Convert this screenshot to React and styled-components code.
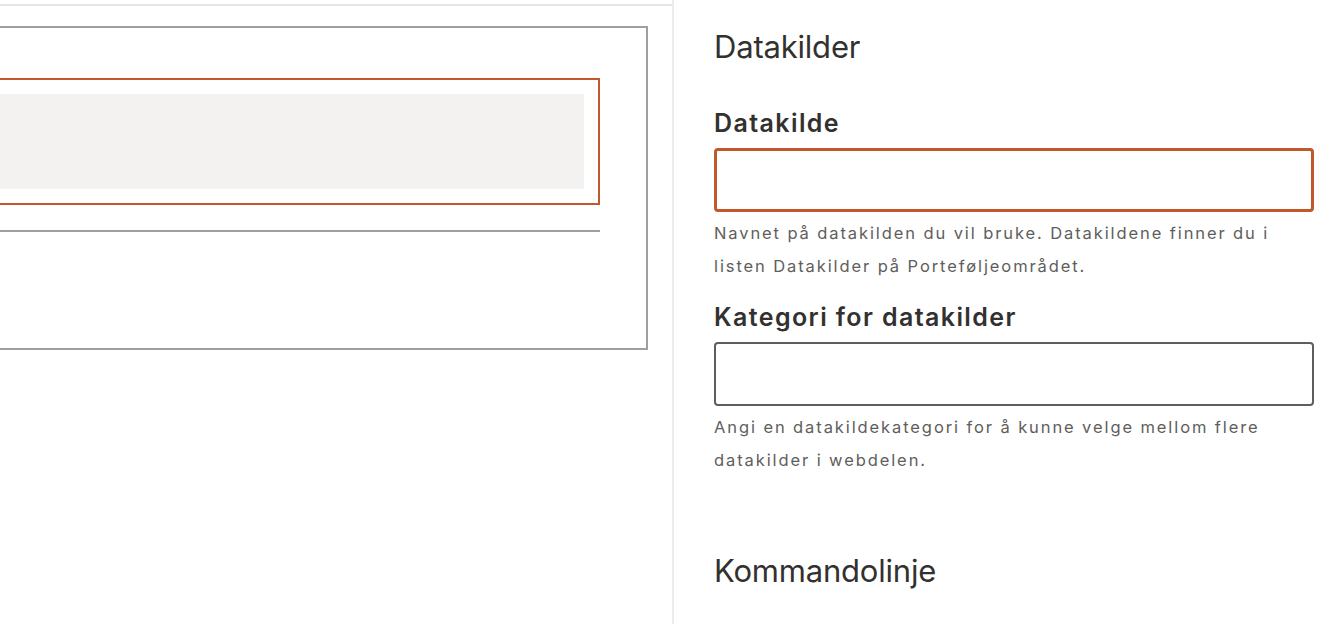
import React from 'react';
import styled, { createGlobalStyle } from 'styled-components';

const GlobalStyle = createGlobalStyle`
  html, body {
    margin: 0;
    padding: 0;
    background: #ffffff;
    overflow: hidden;
  }

  body {
    font-family: Inter, "Noto Sans", "Liberation Sans", sans-serif;
    color: #323130;
  }
`;

const fields = [
  {
    id: 'datasource',
    label: 'Datakilde',
    help: 'Navnet på datakilden du vil bruke. Datakildene finner du i listen Datakilder på Porteføljeområdet.',
    focused: true,
  },
  {
    id: 'category',
    label: 'Kategori for datakilder',
    help: 'Angi en datakildekategori for å kunne velge mellom flere datakilder i webdelen.',
    focused: false,
  },
];

const App = () => (
  <>
    <GlobalStyle />
    <Page>
      <Canvas>
        <TopRule />
        <Section>
          <Zone>
            <Placeholder />
          </Zone>
          <Divider />
        </Section>
      </Canvas>
      <PropertyPane>
        <GroupTitle>Datakilder</GroupTitle>
        <Fields>
          {fields.map(field => (
            <Field key={field.id}>
              <Label htmlFor={field.id}>{field.label}</Label>
              <TextInput id={field.id} type="text" $focused={field.focused} />
              <Help>{field.help}</Help>
            </Field>
          ))}
        </Fields>
        <GroupTitle $spaced>Kommandolinje</GroupTitle>
      </PropertyPane>
    </Page>
  </>
);

const Page = styled.div`
  display: flex;
  height: 100vh;
  overflow: hidden;
`;

const Canvas = styled.main`
  flex: 0 0 672px;
  padding: 4px 24px 0 0;
  box-sizing: border-box;
  overflow: hidden;
`;

const TopRule = styled.div`
  border-top: 2px solid #e6e6e6;
  margin-right: -24px;
`;

const Section = styled.section`
  margin: 20px 0 0 -80px;
  height: 324px;
  box-sizing: border-box;
  border: 2px solid #a19f9d;
  padding: 50px 46px 0 0;
`;

const Zone = styled.div`
  height: 127px;
  box-sizing: border-box;
  border: 2px solid #c0582b;
  padding: 14px;
`;

const Placeholder = styled.div`
  height: 95px;
  background: #f3f2f1;
`;

const Divider = styled.hr`
  margin: 25px 0 0;
  border: 0;
  border-top: 2px solid #a19f9d;
`;

const PropertyPane = styled.aside`
  flex: 1 1 auto;
  border-left: 2px solid #ececec;
  padding: 27px 20px 0 40px;
  box-sizing: border-box;
`;

const GroupTitle = styled.h2`
  margin: ${({ $spaced }) => ($spaced ? '74px' : '0')} 0 0;
  font-size: 31px;
  line-height: 40px;
  font-weight: 400;
  letter-spacing: -0.2px;
  color: #323130;
`;

const Fields = styled.div`
  display: flex;
  flex-direction: column;
  gap: 18px;
  margin-top: 40px;
`;

const Field = styled.div`
  display: flex;
  flex-direction: column;
`;

const Label = styled.label`
  font-size: 25px;
  line-height: 32px;
  font-weight: 600;
  letter-spacing: 1.4px;
  color: #323130;
  margin-bottom: 9px;
`;

const TextInput = styled.input`
  box-sizing: border-box;
  width: 100%;
  height: 64px;
  margin: 0;
  border: ${({ $focused }) => ($focused ? '3px solid #c0582b' : '2px solid #605e5c')};
  border-radius: 4px;
  background: #ffffff;
  outline: none;
  font: inherit;
`;

const Help = styled.p`
  margin: 5px 0 0;
  max-width: 585px;
  font-size: 16.5px;
  line-height: 33px;
  letter-spacing: 1.9px;
  color: #605e5c;
`;

export default App;
